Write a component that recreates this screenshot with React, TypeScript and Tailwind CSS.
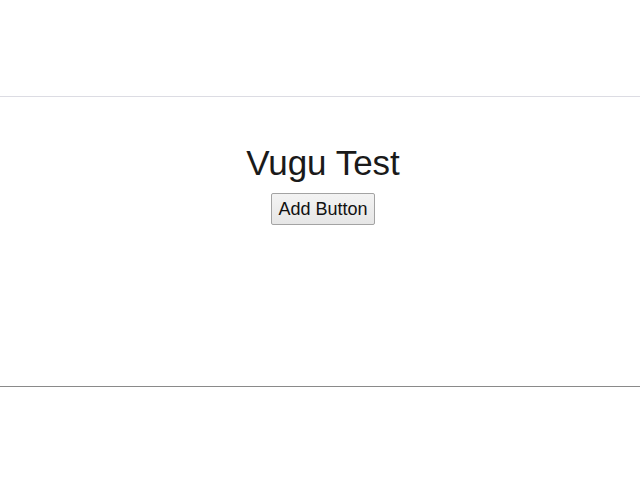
export default function App() {
  return (
    <div className="w-[640px] h-[480px] bg-white flex flex-col" style={{ fontFamily: '"Liberation Sans", Arial, sans-serif' }}>
      <div className="h-[96px] shrink-0" />
      <div className="h-px shrink-0 bg-[#dcdce3]" />
      <div className="flex flex-col items-center pl-[6px]">
        <h1 className="mt-[46px] text-[35px] leading-[40px] text-[#1a1a1a]">Vugu Test</h1>
        <button className="mt-[10px] w-[104px] h-[32px] border border-[#a3a3a3] bg-gradient-to-b from-[#f3f3f3] to-[#e6e6e6] text-[18px] leading-[20px] text-[#111] rounded-[2px]">
          Add Button
        </button>
      </div>
      <div className="h-[161px] shrink-0" />
      <div className="h-px shrink-0 bg-[#8a8a8a]" />
    </div>
  );
}
